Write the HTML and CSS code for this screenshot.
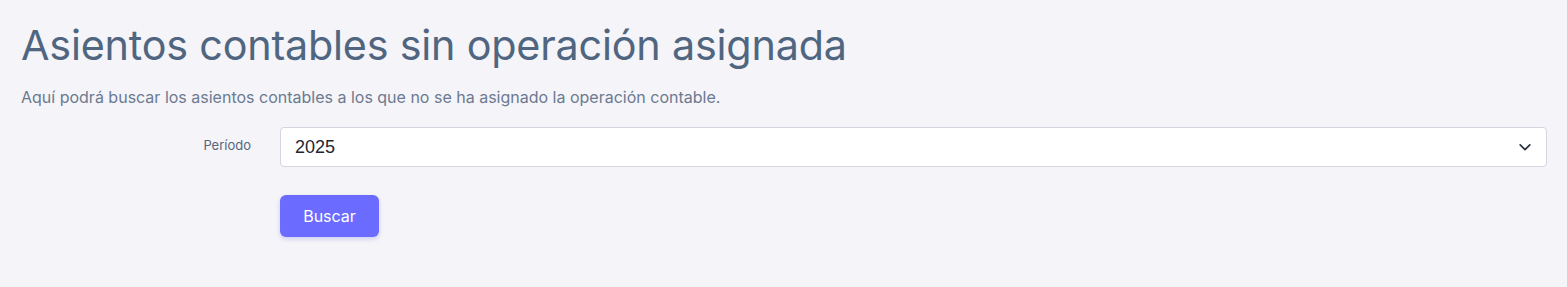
FILE: index.html
```html
<!DOCTYPE html>
<html lang="es">
<head>
<meta charset="utf-8">
<link rel="stylesheet" href="styles.css">
</head>
<body>
<main class="page">
  <h1 class="title">Asientos contables sin operación asignada</h1>
  <p class="lead">Aquí podrá buscar los asientos contables a los que no se ha asignado la operación contable.</p>
  <form class="form">
    <label class="label" for="periodo">Período</label>
    <div class="select">
      <span class="select-value">2025</span>
      <svg class="chevron" width="14" height="14" viewBox="0 0 16 16" fill="none" stroke="#2b3443" stroke-width="2" stroke-linecap="round" stroke-linejoin="round"><path d="M2.5 5.5 8 11l5.5-5.5"/></svg>
    </div>
    <div></div>
    <div class="actions"><button type="button" class="btn">Buscar</button></div>
  </form>
</main>
</body>
</html>
```
FILE: styles.css
```css
html, body {
  margin: 0;
  padding: 0;
  background: #f4f4f9;
}
body {
  font-family: Inter, "Noto Sans", "Liberation Sans", sans-serif;
}
.page {
  padding: 17px 20px 40px 21px;
}
.title {
  margin: 0;
  font-size: 41.3px;
  font-weight: 400;
  line-height: 56px;
  color: #506680;
  letter-spacing: -0.2px;
}
.lead {
  margin: 13px 0 0;
  font-size: 16px;
  line-height: 22px;
  color: #6c7a90;
}
.form {
  margin-top: 19px;
  display: grid;
  grid-template-columns: 259px 1fr;
  row-gap: 28px;
  align-items: center;
}
.label {
  text-align: right;
  padding-right: 29px;
  font-size: 13px;
  color: #56667d;
  margin-top: -4px;
}
.select {
  height: 40px;
  box-sizing: border-box;
  border: 1px solid #d3d6de;
  border-radius: 4px;
  background: #fff;
  display: flex;
  align-items: center;
  justify-content: space-between;
  padding: 0 14px 0 14px;
}
.select-value {
  font-family: "Liberation Sans", Arial, sans-serif;
  font-size: 18px;
  color: #1f2633;
}
.chevron {
  display: block;
}
.actions {
  display: flex;
}
.btn {
  height: 42px;
  width: 99px;
  border: none;
  border-radius: 6px;
  background: #6b6bff;
  color: #fff;
  font-family: Inter, "Noto Sans", sans-serif;
  font-size: 16px;
  box-shadow: 0 2px 4px rgba(90, 90, 220, 0.25);
  cursor: pointer;
}
```
